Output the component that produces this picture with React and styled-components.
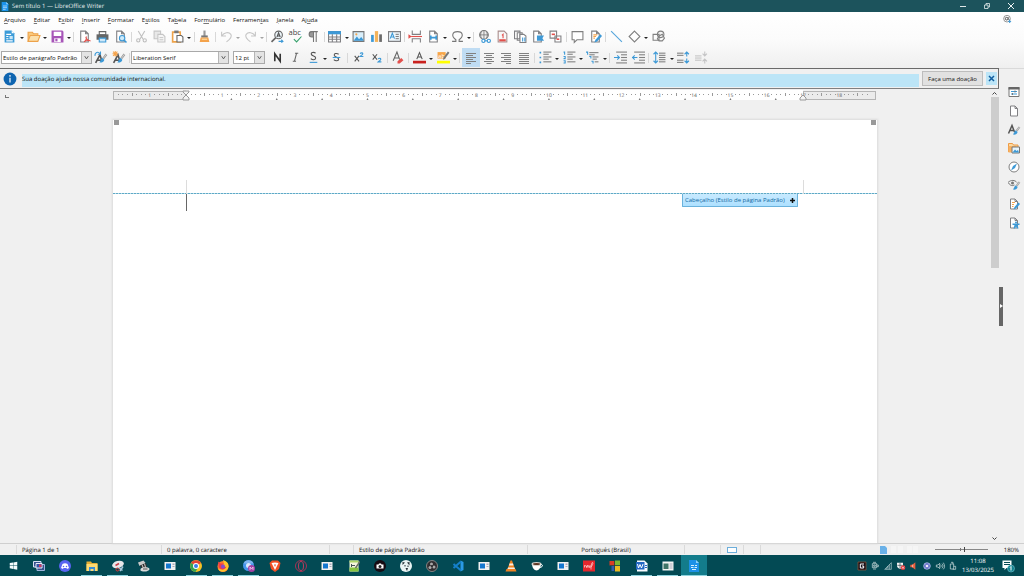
import React from 'react';
import styled, { createGlobalStyle } from 'styled-components';

const GlobalStyle = createGlobalStyle`
  * { box-sizing: border-box; }
  body {
    margin: 0;
    overflow: hidden;
    font-family: "Open Sans", "Noto Sans", sans-serif;
    font-size: 6px;
    line-height: 8px;
    color: #111;
    text-rendering: geometricPrecision;
  }
  button, select, input {
    font: inherit;
    color: inherit;
    margin: 0;
    padding: 0;
    border: 0;
    background: none;
  }
`;

const Window = styled.div`
  display: flex;
  flex-direction: column;
  height: 100vh;
  background: #f0f0f0;
`;

const TitleBar = styled.header`
  display: flex;
  align-items: center;
  height: 12px;
  padding: 0 1px;
  background: #1c535c;
  color: #e4eced;
`;

const TitleText = styled.span`
  flex: 1;
  padding-left: 3px;
`;

const WindowButton = styled.button`
  display: grid;
  place-items: center;
  width: 24px;
  height: 12px;
`;

const Bars = styled.div`
  height: 56px;
  padding-top: 3px;
  background: linear-gradient(#ffffff, #fbfbfb 50%, #efefef);
`;

const MenuBar = styled.nav`
  display: flex;
  align-items: center;
  gap: 8px;
  height: 9px;
  margin-bottom: 2px;
  padding: 0 13px 0 4px;

  span {
    flex: 1;
  }
`;

const MenuItem = styled.button`
  white-space: nowrap;

  u {
    text-underline-offset: 1px;
    text-decoration-thickness: 1px;
    text-decoration-color: #777;
  }
`;

const ToolRow = styled.div`
  display: flex;
  align-items: center;
  height: 21px;
  padding-left: 1px;
`;

const Tools = styled.div`
  display: flex;
  align-items: center;
  height: 20px;
  width: ${p => p.$width}px;
`;

const ToolButton = styled.button`
  display: grid;
  place-items: center;
  flex: 18 1 0;
  min-width: 0;
  height: 19px;
  background: ${p => (p.$on ? '#bfdcf3' : 'none')};
  opacity: ${p => (p.disabled ? 0.4 : 1)};
`;

const ArrowButton = styled.button`
  display: grid;
  place-items: center;
  flex: 6 1 0;
  min-width: 0;
  height: 19px;
  opacity: ${p => (p.disabled ? 0.4 : 1)};

  &::before {
    content: "";
    margin-top: 2px;
    border: 2px solid transparent;
    border-top-color: #222;
    border-bottom: 0;
  }
`;

const Separator = styled.i`
  flex: 4 1 0;
  height: 10px;
  background: linear-gradient(#d8d8d8, #d8d8d8) center / 1px 100% no-repeat;
`;

const Combo = styled.label`
  display: grid;
  grid-template-columns: 1fr 10px;
  width: ${p => p.$width}px;
  height: 13px;
  margin-right: ${p => p.$after || 0}px;
  border: 1px solid #a9a9a9;
  background: #fff;

  select {
    grid-area: 1 / 1 / 2 / 3;
    appearance: none;
    padding-left: 1px;
    outline: 0;
  }

  svg {
    grid-area: 1 / 2;
    width: 10px;
    height: 11px;
    background: #e3e3e3;
    border-left: 1px solid #b5b5b5;
    pointer-events: none;
  }
`;

const Body = styled.div`
  display: flex;
  flex: 1;
  min-height: 0;
`;

const Main = styled.main`
  display: flex;
  flex-direction: column;
  flex: 1;
  min-width: 0;
`;

const InfoBar = styled.section`
  display: flex;
  align-items: center;
  gap: 3px;
  height: 21px;
  padding: 0 1px 0 3px;
  border: 1px solid #6a6a6a;
  border-left: 0;
  border-bottom-color: #808080;
`;

const InfoText = styled.p`
  flex: 1;
  align-self: end;
  height: 13px;
  margin: 0 0 1px 2px;
  line-height: 10px;
  background: #bce5f7;
`;

const DonateButton = styled.button`
  width: 61px;
  height: 15px;
  background: #e1e1e1;
  border: 1px solid #bdbdbd;
`;

const CloseButton = styled.button`
  display: grid;
  place-items: center;
  width: 11px;
  height: 13px;
  background: #bce5f7;
`;

const Workspace = styled.div`
  display: flex;
  flex: 1;
  min-height: 0;
`;

const Canvas = styled.div`
  display: flex;
  flex-direction: column;
  flex: 1;
  min-width: 0;
`;

const RulerRow = styled.div`
  display: flex;
  flex: none;
  align-items: center;
  height: 12px;
  margin-bottom: 19px;
  position: relative;
`;

const TabKind = styled.button`
  position: absolute;
  left: 5px;
  top: 6px;
  width: 4px;
  height: 3px;
  border-left: 1px solid #777;
  border-bottom: 1px solid #777;
`;

const Ruler = styled.svg`
  display: block;
  width: 764px;
  height: 12px;
  margin: 0 auto;
  font-size: 5px;
`;

const Sheet = styled.article`
  position: relative;
  flex: 1;
  width: 764px;
  margin: 0 auto;
  background: #fff;
  box-shadow: 0 0 2px 1px #dadada;
`;

const Handle = styled.i`
  position: absolute;
  top: 0;
  ${p => p.$side}: 1px;
  width: 5px;
  height: 5px;
  background: #999;
`;

const HeaderArea = styled.div`
  display: flex;
  align-items: flex-end;
  justify-content: space-between;
  height: 74px;
  padding: 0 73px;
  background: repeating-linear-gradient(90deg, #5fa9c6 0 2px, #b5dbe9 2px 3px) bottom / 100% 1px no-repeat;

  i {
    width: 1px;
    height: 14px;
    background: #dcdcdc;
  }
`;

const Caret = styled.div`
  width: 1px;
  height: 17px;
  margin-left: 73px;
  background: #666;
`;

const HeaderTag = styled.button`
  position: absolute;
  top: 74px;
  right: 79px;
  display: flex;
  align-items: center;
  justify-content: space-between;
  width: 116px;
  height: 13px;
  padding: 0 2px;
  border: 1px solid #6ab2dc;
  border-top: 0;
  border-radius: 0 0 1px 1px;
  background: linear-gradient(#c8eaff, #ade0ff);
  color: #11699f;
`;

const ScrollBar = styled.div`
  display: flex;
  flex-direction: column;
  align-items: center;
  justify-content: space-between;
  width: 9px;
  background: #f0f0f0;
`;

const ScrollArrow = styled.button`
  display: grid;
  place-items: center;
  width: 9px;
  height: 8px;
  transform: ${p => (p.$down ? 'rotate(180deg)' : 'none')};
`;

const ScrollTrack = styled.div`
  flex: 1;
  width: 8px;

  &::before {
    content: "";
    display: block;
    height: 39%;
    background: #cdcdcd;
  }
`;

const Splitter = styled.div`
  display: flex;
  align-items: center;
  width: 4px;
  border-top: 1px solid #d9d9d9;
`;

const SplitterButton = styled.button`
  display: grid;
  place-items: center;
  width: 4px;
  height: 39px;
  background: #666;
`;

const SideBar = styled.aside`
  display: flex;
  flex-direction: column;
  align-items: center;
  width: 21px;
  padding-top: 14px;
  border-top: 1px solid #d9d9d9;
`;

const Deck = styled.div`
  display: flex;
  flex-direction: column;
  height: 149px;

  button {
    display: grid;
    place-items: center;
    flex: 1;
    width: 20px;
    min-height: 0;
  }
`;

const StatusBar = styled.footer`
  display: flex;
  align-items: center;
  height: 12px;
  border-top: 1px solid #cfcfcf;
`;

const StatusCell = styled.div`
  display: flex;
  align-items: center;
  justify-content: ${p => (p.$center ? 'center' : 'flex-start')};
  width: ${p => p.$width}px;
  height: 9px;
  padding-left: ${p => (p.$center ? 0 : 5)}px;
  border-right: 1px solid #dadada;
  white-space: nowrap;
`;

const StatusEnd = styled.div`
  display: flex;
  align-items: center;
  justify-content: flex-end;
  gap: 16px;
  flex: 1;
  padding-right: 5px;
`;

const Zoom = styled.input`
  appearance: none;
  width: 53px;
  height: 7px;
  background:
    linear-gradient(#777, #777) 48% 50% / 1px 3px no-repeat,
    linear-gradient(#888, #888) center / 100% 1px no-repeat;

  &::-webkit-slider-thumb {
    appearance: none;
    width: 1px;
    height: 5px;
    background: #444;
  }
`;

const TaskBar = styled.footer`
  display: flex;
  justify-content: space-between;
  height: 21px;
  background: #034a54;
  color: #fff;
`;

const Apps = styled.div`
  display: flex;
  width: 707px;
`;

const AppButton = styled.button`
  display: grid;
  place-items: center;
  flex: 1;
  min-width: 0;
  background: ${p => (p.$active ? '#137c8b' : 'none')};
  box-shadow: ${p => (p.$active ? 'inset 0 -1px #8fd3de' : 'none')};

  &::after {
    content: "";
    display: ${p => (p.$open ? 'block' : 'none')};
    grid-area: 1 / 1;
    align-self: end;
    width: 21px;
    height: 1px;
    background: #8fd3de;
  }

  svg {
    grid-area: 1 / 1;
  }
`;

const Tray = styled.div`
  display: flex;
  align-items: center;
  padding-right: 10px;

  button {
    display: grid;
    place-items: center;
    width: 13px;
    height: 20px;
  }
`;

const Clock = styled.time`
  width: 42px;
  padding-right: 4px;
  text-align: center;
  line-height: 9px;
`;

const G = '#808083';
const B = '#3d99d6';
const R = '#e2504c';

const doc = <path d="M5 2h9l5 5v15H5zM14 2v5h5" fill="#fff" stroke={G} strokeWidth="2" />;
const lines = (list, color = '#808080') => list.map(([x, y, w], i) => <path key={i} d={`M${x} ${y}h${w}`} stroke={color} strokeWidth="2" />);
const pen = (
  <g>
    <path d="M23 6l-6 8" stroke="#999" strokeWidth="4" />
    <path d="M23 6l-6 8" stroke="#fff" strokeWidth="1" />
    <path d="M16 13c-3 0-3 4-6 8 4 1 9-1 9-5z" fill={B} />
  </g>
);

// Everything is drawn on a 24 unit grid
const icons = {
  newDoc: <><path d="M3 1h13l5 5v17H3z" fill="#3b9bd8" /><path d="M16 1v5h5" fill="#fff" /><path d="M6 8h9M6 12h4M6 16h4M6 20h12" stroke="#fff" strokeWidth="2" /><path d="M12 11h6v6h-6z" fill="#c8e6f8" /></>,
  open: <><path d="M2 21V4h8l2 3h8v4" fill="#f9c97b" stroke="#eda24a" strokeWidth="2" /><path d="M2 21L6 10h18l-4 11z" fill="#fbe0ac" stroke="#eda24a" strokeWidth="2" /></>,
  save: <><path d="M1 1h20l2 2v20H1z" fill="#a755b8" /><path d="M5 3h14v8H5zM6 15h12v7H6z" fill="#fff" /><path d="M8 16h4v5H8z" fill="#a755b8" /></>,
  pdf: <>{doc}<path d="M11 22c3-2 5-6 4-9-2 2 4 7 8 7-4-1-9 0-12 2" stroke={R} strokeWidth="2" fill="none" /></>,
  print: <><path d="M6 3h12v6H6z" fill="#fff" stroke="#666" strokeWidth="2" /><path d="M1 8h22v10H1z" fill="#666" /><path d="M6 15h12v7H6z" fill="#cfe8f8" stroke={B} strokeWidth="2" /></>,
  preview: <>{doc}<circle cx="15" cy="15" r="5" fill="#cfeaf9" stroke={B} strokeWidth="2" /><path d="M18 18l5 5" stroke={B} strokeWidth="3" /></>,
  cut: <><path d="M6 2l9 15M18 2L9 17" stroke="#666" strokeWidth="2" /><circle cx="6" cy="19" r="3" fill="none" stroke="#666" strokeWidth="2" /><circle cx="18" cy="19" r="3" fill="none" stroke="#666" strokeWidth="2" /></>,
  copy: <><path d="M2 2h12v14H2z" fill="#ccc" stroke="#777" strokeWidth="2" /><path d="M9 8h9l4 4v10H9z" fill="#eee" stroke="#777" strokeWidth="2" />{lines([[12, 14, 7], [12, 18, 7]])}</>,
  paste: <><path d="M3 4h14v18H3z" fill="#fff" stroke="#eda24a" strokeWidth="3" /><path d="M6 1h8v5H6z" fill="#777" /><path d="M11 10h8l3 3v9H11z" fill="#fff" stroke="#666" strokeWidth="2" /></>,
  brush: <><path d="M10 1h4v10h-4z" fill="#999" /><path d="M6 10h12v4H6z" fill="#777" /><path d="M5 14h14l2 8H3z" fill="#f4a34b" /><path d="M7 17h10" stroke="#fbe0ac" strokeWidth="2" /></>,
  undo: <path d="M3 3v8h8M3 11c5-7 13-8 17-3 3 5-1 9-8 14" fill="none" stroke="#777" strokeWidth="2" />,
  redo: <path d="M21 3v8h-8M21 11C16 4 8 3 4 8c-3 5 1 9 8 14" fill="none" stroke="#777" strokeWidth="2" />,
  find: <><circle cx="14" cy="9" r="7" fill="#eef7fc" stroke="#666" strokeWidth="2" /><path d="M9 14l-8 8" stroke="#666" strokeWidth="3" /><path d="M11 13l3-8 3 8M12 11h4" stroke="#555" strokeWidth="2" fill="none" /><path d="M14 21h8m-3-3l3 3-3 2" stroke={B} strokeWidth="2" fill="none" /></>,
  spell: <><text x="-1" y="10" fontSize="14" fill="#444">abc</text><path d="M9 17l5 5 9-10" stroke="#35a06b" strokeWidth="2" fill="none" /></>,
  pilcrow: <><path d="M12 2H9a5 5 0 0 0 0 11h3z" fill="#999" /><path d="M20 3H9a5 5 0 0 0 0 10h3M12 3v19M17 3v19" stroke="#777" strokeWidth="2" fill="none" /></>,
  table: <><path d="M1 3h22v19H1z" fill="#fff" stroke={G} strokeWidth="2" /><path d="M0 2h24v6H0z" fill={B} /><path d="M1 13h22M1 17h22M8 8v14M16 8v14" stroke={G} strokeWidth="2" /></>,
  image: <><path d="M2 3h20v18H2z" fill="#d9effb" stroke="#777" strokeWidth="2" /><path d="M3 20l6-8 4 5 4-4 4 5v2z" fill={B} /><circle cx="8" cy="8" r="2" fill="#f4a34b" /></>,
  chart: <><path d="M2 9h5v13H2z" fill={B} /><path d="M9 2h6v20H9z" fill="#f4b35b" /><path d="M17 8h5v14h-5z" fill="#6b6b6b" /></>,
  textbox: <><path d="M1 3h22v18H1z" fill="#eef7fc" stroke={G} strokeWidth="2" /><path d="M4 16l4-10 4 10M5 13h6" stroke={B} strokeWidth="2" fill="none" />{lines([[14, 8, 6], [14, 12, 6], [14, 16, 6]])}</>,
  pageBreak: <><path d="M6 1v7h15V1M6 23v-7h15v7" fill="none" stroke={G} strokeWidth="2" /><path d="M4 12h20" stroke={R} strokeWidth="2" /><path d="M-1 8l6 4-6 4z" fill={R} /></>,
  field: <>{doc}<path d="M7 14h10M7 10v8M17 10v8" stroke={B} strokeWidth="3" /></>,
  omega: <path d="M2 21h7v-3C0 12 2 3 12 3s12 9 3 15v3h7" fill="none" stroke="#777" strokeWidth="2" />,
  link: <><circle cx="11" cy="9" r="8" fill="#eee" stroke="#777" strokeWidth="2" /><path d="M3 9h16M11 1v16M7 2c-3 5-3 9 0 14M15 2c3 5 3 9 0 14" stroke="#777" strokeWidth="1.500" fill="none" /><circle cx="10" cy="20" r="3" fill="#fff" stroke={B} strokeWidth="2" /><circle cx="20" cy="20" r="3" fill="#fff" stroke={B} strokeWidth="2" /><path d="M12 20h6" stroke={B} strokeWidth="2" /></>,
  footnote: <><path d="M4 2h11l5 5v15H4z" fill="#f8f8f8" stroke="#a98c8b" strokeWidth="2" /><path d="M6 19h12" stroke={R} strokeWidth="4" /><path d="M11 10l2-2v7" stroke={R} strokeWidth="2" fill="none" /></>,
  endnote: <><path d="M1 2h10v14H1zM6 5h9v14H6z" fill="#fff" stroke={G} strokeWidth="2" /><path d="M11 8h7l4 3v12H11z" fill="#fff" stroke={G} strokeWidth="2" /><path d="M16 14v7M20 14v7" stroke={B} strokeWidth="2" /></>,
  bookmark: <>{doc}<path d="M11 10h13l-3 5 3 5H11z" fill={B} /></>,
  crossRef: <><path d="M2 2h12v13H2zM11 11h11v11H11z" fill="#fff" stroke={G} strokeWidth="2" /><path d="M5 8h6" stroke={R} strokeWidth="3" /><path d="M14 17h5" stroke={R} strokeWidth="3" /></>,
  comment: <path d="M2 3h20v15H11l-5 5v-5H2z" fill="#fff" stroke="#808080" strokeWidth="2" />,
  track: <>{doc}<path d="M8 9h7M8 12h5M8 15h3" stroke="#f4a34b" strokeWidth="2" /><path d="M21 8l3 3-9 10-5 2 2-5z" fill={B} /></>,
  line: <path d="M2 2l20 20" stroke="#56a6dc" strokeWidth="2" />,
  diamond: <path d="M12 2l10 10-10 10L2 12z" fill="#fff" stroke="#808080" strokeWidth="2" />,
  shapes: <><circle cx="16" cy="8" r="6" fill="#f4f4f4" stroke="#808080" strokeWidth="2" /><path d="M2 8h11v11H2z" fill="none" stroke="#808080" strokeWidth="2" /><path d="M13 11l6-3 4 7-4 5h-6l-3-4z" fill="none" stroke="#808080" strokeWidth="2" /></>,
  styleUpdate: <><path d="M3 22L11 7l4 13M6 17h8" stroke="#555" strokeWidth="3" fill="none" /><path d="M2 9c-1-6 6-9 9-4M12 1v5H7" stroke={B} strokeWidth="2" fill="none" />{pen}</>,
  styleNew: <><path d="M3 22L11 7l4 13M6 17h8" stroke="#555" strokeWidth="3" fill="none" /><path d="M6 0v10M1 5h10M2 1l8 8M10 1L2 9" stroke="#f4a34b" strokeWidth="2" />{pen}</>,
  bold: <path d="M7 19V5l10 14V5" stroke="#333" strokeWidth="3" fill="none" />,
  italic: <path d="M11 4h6M7 19h6M14 4l-4 15" stroke="#666" strokeWidth="2" fill="none" />,
  underline: <><path d="M16 4c-4-3-9-1-8 2 1 4 8 3 8 7s-6 4-9 1" stroke="#555" strokeWidth="2" fill="none" /><path d="M5 21h14" stroke={B} strokeWidth="2" /></>,
  strike: <><path d="M16 6c-4-3-9-1-8 2 1 4 8 3 8 7s-6 4-9 1" stroke="#555" strokeWidth="2" fill="none" /><path d="M5 12h14" stroke={B} strokeWidth="2" /></>,
  sup: <><path d="M5 9l8 10M13 9L5 19" stroke="#555" strokeWidth="2" /><path d="M15 5c1-2 5-2 5 0s-3 3-5 5h6" stroke={B} strokeWidth="2" fill="none" /></>,
  sub: <><path d="M5 6l8 10M13 6L5 16" stroke="#555" strokeWidth="2" /><path d="M15 15c1-2 5-2 5 0s-3 3-5 5h6" stroke={B} strokeWidth="2" fill="none" /></>,
  clear: <><path d="M4 18L11 2l5 14M7 13h8" stroke="#666" strokeWidth="2" fill="none" /><path d="M12 19l7-6 4 4-7 6h-4z" fill={R} /></>,
  fontColor: <><path d="M7 15l5-12 5 12M8 11h8" stroke="#555" strokeWidth="2" fill="none" /><path d="M0 18h24v5H0z" fill="#c9211e" /></>,
  highlight: <><path d="M1 2h15v12H1z" fill="#f7a649" /><text x="2" y="12" fontSize="11" fill="#fff">ab</text><path d="M23 3l-9 12-3 1 1-4 8-11z" fill="#777" /><path d="M0 18h24v5H0z" fill="#ffff00" /></>,
  left: lines([[2, 3, 20], [2, 7, 14], [2, 11, 20], [2, 15, 14], [2, 19, 20], [2, 23, 10]]),
  center: lines([[2, 3, 20], [6, 7, 12], [2, 11, 20], [6, 15, 12], [2, 19, 20], [7, 23, 10]]),
  right: lines([[2, 3, 20], [8, 7, 14], [2, 11, 20], [8, 15, 14], [2, 19, 20], [12, 23, 10]]),
  justify: lines([[2, 3, 20], [2, 7, 20], [2, 11, 20], [2, 15, 20], [2, 19, 20], [2, 23, 20]]),
  bullets: <><path d="M1 3h3M1 12h3M1 21h3" stroke={B} strokeWidth="3" />{lines([[8, 2, 15], [8, 6, 10], [8, 11, 15], [8, 15, 10], [8, 20, 15]])}</>,
  numbers: <><path d="M1 2h2v5M1 10h3v4H1M1 18h3v4H1" stroke={B} strokeWidth="2" fill="none" />{lines([[8, 2, 15], [8, 6, 10], [8, 11, 15], [8, 15, 10], [8, 20, 15]])}</>,
  outline: <><path d="M0 2h3v5M6 10h3v4M10 19h3v4" stroke={B} strokeWidth="2" fill="none" />{lines([[6, 3, 17], [6, 7, 10], [12, 11, 11], [12, 15, 8], [16, 20, 7]])}</>,
  indent: <>{lines([[4, 2, 20], [13, 7, 11], [13, 12, 11], [13, 17, 11], [4, 22, 20]])}<path d="M0 12h10M6 8l4 4-4 4" stroke={B} strokeWidth="2" fill="none" /></>,
  outdent: <>{lines([[4, 2, 20], [13, 7, 11], [13, 12, 11], [13, 17, 11], [4, 22, 20]])}<path d="M0 12h10M5 8l-4 4 4 4" stroke={B} strokeWidth="2" fill="none" /></>,
  spacing: <><path d="M5 2v20M1 6l4-4 4 4M1 18l4 4 4-4" stroke={B} strokeWidth="2" fill="none" />{lines([[11, 4, 12], [11, 8, 12], [11, 12, 12], [11, 16, 12], [11, 20, 12]])}</>,
  paraMore: <>{lines([[0, 4, 12], [0, 8, 12], [0, 17, 12], [0, 21, 12]])}<path d="M18 2v8M14 6l4-4 4 4M18 14v8M14 18l4 4 4-4" stroke={B} strokeWidth="2" fill="none" /></>,
  paraLess: <>{lines([[0, 9, 12], [0, 13, 12], [0, 17, 12]])}<path d="M18 1v8M14 5l4 4 4-4M18 23v-8M14 19l4-4 4 4" stroke={G} strokeWidth="2" fill="none" /></>,
  update: <><circle cx="12" cy="11" r="10" fill="none" stroke="#666" strokeWidth="2" /><circle cx="11" cy="11" r="4" fill="none" stroke="#555" strokeWidth="3" /><path d="M16 6v8l4 1" stroke="#555" strokeWidth="2" fill="none" /><path d="M20 14v8m-4-4l4 5 4-5" stroke={B} strokeWidth="3" fill="none" /></>,
  info: <><circle cx="12" cy="12" r="11" fill="#0e64b0" /><path d="M12 10v8M12 5v3" stroke="#fff" strokeWidth="2" /></>,
  props: <><path d="M2 3h20v18H2z" fill="#fff" stroke="#777" strokeWidth="2" /><path d="M1 2h22v5H1z" fill="#666" /><path d="M6 11h12M6 16h12" stroke={B} strokeWidth="2" /><path d="M14 9v4M9 14v4" stroke="#777" strokeWidth="2" /></>,
  page: doc,
  styles: <><path d="M1 19L8 3l5 13M4 13h8" stroke="#555" strokeWidth="3" fill="none" />{pen}</>,
  gallery: <><path d="M1 20V3h8l2 3h9v5" fill="#fbd9a0" stroke="#ee9a45" strokeWidth="2" /><path d="M1 8h16v13H1z" fill="#f7b163" /><path d="M8 10h15v12H8z" fill="#e8f5fc" stroke="#777" strokeWidth="2" /><path d="M9 21l5-6 3 3 3-2 2 5z" fill={B} /></>,
  navigator: <><circle cx="12" cy="12" r="10" fill="#fff" stroke="#808080" strokeWidth="2" /><path d="M18 5l-4 9-8 5 4-9z" fill={B} /></>,
  inspect: <><path d="M0 7c6-6 14-5 18 0M1 8c4 6 8 6 12 4" stroke="#777" strokeWidth="2" fill="none" /><circle cx="9" cy="8" r="3" fill="#777" />{pen}</>,
  check: <>{doc}<path d="M8 9h6M8 13h4M8 17h3" stroke="#f4a34b" strokeWidth="2" /><path d="M21 9l3 3-8 9-5 2 2-5z" fill={B} /></>,
  access: <>{doc}<circle cx="16" cy="11" r="2" fill={B} /><path d="M9 13h14v3h-4l2 7h-3l-2-4-2 4h-3l2-7H9z" fill={B} /></>,
};

const Icon = ({ name, size = 13 }) => (
  <svg width={size} height={size} viewBox="0 0 24 24" overflow="visible" aria-hidden="true">{icons[name]}</svg>
);

const windowTile = <><path d="M1 4h22v16H1z" fill="#f1f1f1" /><path d="M4 7h10v10H4z" fill="#1477cf" /><path d="M17 7h4v3h-4zM17 12h4v2h-4z" fill="#aab" /></>;

const apps = [
  ['Iniciar', <path d="M2 5l9-1v8H2zM12 4l10-2v10H12zM2 13h9v8l-9-2zM12 13h10v10l-10-2z" fill="#f4fbfc" />],
  ['Visão de tarefas', <><path d="M1 3h15v11H1z" fill="#34508e" stroke="#d7e0f5" strokeWidth="2" /><path d="M8 9h15v12H8z" fill="#34508e" stroke="#9fb4dc" strokeWidth="2" /><path d="M6 7h12v9H6z" fill="#3451a5" stroke="#e8ecf8" strokeWidth="2" /><path d="M12 9h5v5h-5z" fill="#d4385c" /></>],
  ['Discord', <><circle cx="12" cy="12" r="12" fill="#5865f2" /><path d="M7 8c3-2 7-2 10 0l3 8-4 2-1-2H9l-1 2-4-2z" fill="#fff" /><circle cx="9" cy="13" r="1.500" fill="#5865f2" /><circle cx="15" cy="13" r="1.500" fill="#5865f2" /></>],
  ['Explorador', <><path d="M1 3h9l2 3h11v16H1z" fill="#e8ae35" /><path d="M1 8h22v14H1z" fill="#ffda72" /><path d="M6 14h12v8h-3v-4H9v4H6z" fill="#3b8ed6" /></>, 'open'],
  ['Captura', <><ellipse cx="12" cy="9" rx="12" ry="7" fill="#e8e8ea" transform="rotate(-15 12 9)" /><path d="M7 11l7-4" stroke="#ca3c48" strokeWidth="3" /><circle cx="11" cy="19" r="3" fill="none" stroke="#d33" strokeWidth="2" /><path d="M14 15l7 6M22 13l-6 9" stroke="#aac9dc" strokeWidth="3" /></>, 'open'],
  ['Scanner', <><path d="M0 5l11-4 4 5-12 6z" fill="#c9c9c9" /><path d="M4 11l12-5 2 9-10 3z" fill="#34302f" /><path d="M8 9l3 8M13 7l2 8" stroke="#ccc" strokeWidth="2" /><path d="M5 18c2-5 18-5 18 0s-14 7-18 3z" fill="#dadada" /><path d="M10 18h9" stroke="#555" strokeWidth="2" /></>],
  ['Janela 1', windowTile],
  ['Chrome', <><circle cx="12" cy="12" r="12" fill="#f6c324" /><path d="M12 12L2 6a12 12 0 0 1 20 0z" fill="#e24435" /><path d="M12 12L2 6a12 12 0 0 0 9 18l5-9z" fill="#34a350" /><circle cx="12" cy="12" r="6" fill="#fff" /><circle cx="12" cy="12" r="4" fill="#377de8" /></>, 'open'],
  ['Firefox', <><circle cx="12" cy="13" r="11" fill="#ff7730" /><path d="M12 0c8 2 12 7 11 14-3 11-17 13-21 3 8 5 15 1 13-6z" fill="#ffc52c" /><path d="M2 3l5 4h6l-3 4c3 5 8 3 9 1-1 10-17 9-16-3z" fill="#f23c48" /><circle cx="12" cy="13" r="4" fill="#864dcd" /></>, 'open'],
  ['Chrome perfil', <><circle cx="11" cy="11" r="11" fill="#4796ed" /><path d="M1 7a11 11 0 0 1 20 0z" fill="#7db3ee" /><circle cx="11" cy="11" r="5" fill="#dbeafb" /><circle cx="17" cy="17" r="7" fill="#a541a5" /><path d="M14 20v-6l3 4 3-4v6" stroke="#f3d9f3" strokeWidth="1.500" fill="none" /></>, 'open'],
  ['Brave', <><path d="M6 1h12l5 5-3 12-8 6-8-6L1 6z" fill="#f35025" /><path d="M5 6l7-1 7 1-4 8-3 6-3-6z" fill="#fff" /><path d="M10 9h4l-2 5z" fill="#f35025" /></>],
  ['Opera GX', <><circle cx="12" cy="12" r="11" fill="none" stroke="#a53255" strokeWidth="2" /><ellipse cx="12" cy="12" rx="5" ry="9" fill="none" stroke="#bd3a5c" strokeWidth="2" /></>],
  ['Janela 2', windowTile],
  ['Editor', <><path d="M3 1h18v22H3z" fill="#f5f5df" /><path d="M3 1h18v4H3z" fill="#afd66a" /><path d="M3 15h18v8H3z" fill="#87c440" /><path d="M24 3l-9 13" stroke="#697060" strokeWidth="3" /><path d="M7 8v6M7 11h7" stroke="#455" strokeWidth="2" /></>],
  ['Câmera', <><circle cx="12" cy="12" r="12" fill="#160b12" /><path d="M5 9h4l1-2h4l1 2h4v8H5z" fill="#fff" /><circle cx="12" cy="13" r="3" fill="#252525" /></>],
  ['Panda', <><circle cx="12" cy="12" r="12" fill="#e8f3f3" /><path d="M5 4l5 1-5 5zM19 4l-5 1 5 6z" fill="#233036" /><path d="M9 10h2v3H9zM15 11h2v3h-2zM11 16h5l-2 6z" fill="#233036" /></>],
  ['OBS', <><circle cx="12" cy="12" r="11" fill="#302e31" stroke="#858585" strokeWidth="2" /><circle cx="11" cy="8" r="3" fill="#aaa" /><circle cx="16" cy="14" r="3" fill="#aaa" /><circle cx="8" cy="15" r="3" fill="#aaa" /><circle cx="12" cy="12" r="2" fill="#302e31" /></>],
  ['VS Code', <><path d="M17 1l6 3v16l-6 3z" fill="#2b9be6" /><path d="M18 3L3 16M18 21L3 8" stroke="#1580ca" strokeWidth="4" fill="none" /></>],
  ['Janela 3', windowTile],
  ['VLC', <><path d="M11 1h3l6 17H5z" fill="#ef8223" /><path d="M9 7h7l1 4H8zM6 15h13l1 3H5z" fill="#f6eee5" /><path d="M3 18h18l2 5H1z" fill="#ef8223" /></>],
  ['Java', <><path d="M2 8c1 17 17 17 18 0z" fill="#fff" /><ellipse cx="11" cy="8" rx="10" ry="4" fill="#d8d4d0" /><ellipse cx="11" cy="8" rx="7" ry="2" fill="#5e3523" /><path d="M19 9c6-1 5 6-2 6" stroke="#fff" strokeWidth="2" fill="none" /></>],
  ['Janela 4', windowTile],
  ['PDF', <><path d="M0 1h24v22H0z" fill="#e5262c" /><path d="M3 15v-4l4 1v3l3-5v5l4-4-1 4 4-2c2-3 4-8 2-8s-3 8-3 14" stroke="#ffd7d5" strokeWidth="1.500" fill="none" /></>],
  ['Blocos', <><path d="M1 2h10v9H1z" fill="#db3b24" /><path d="M12 1h10v10H12z" fill="#79b733" /><path d="M5 12h6v10H5z" fill="#315bac" /><path d="M12 12h10v11H12z" fill="#eabb21" /><path d="M11 2v20M2 11h20" stroke="#263b38" strokeWidth="1" /></>],
  ['Word', <><path d="M2 1h15l6 6v16H2z" fill="#f8fbff" /><path d="M0 4h17v15H0z" fill="#2368c4" /><path d="M3 8l2 8 3-7 3 7 3-8" stroke="#fff" strokeWidth="2" fill="none" /><path d="M18 11h4M18 15h4" stroke="#2368c4" strokeWidth="2" /></>, 'open'],
  ['Monitor', <><path d="M1 3h22v18H1z" fill="#f3f5f4" /><path d="M3 7h10v11H3z" fill="#3f7468" /><path d="M15 8h6M15 12h6M15 16h6" stroke="#aab" strokeWidth="2" /></>, 'open'],
  ['LibreOffice', <><path d="M2 0h14l6 6v18H2z" fill="#1c91e7" /><path d="M16 0l6 6h-6z" fill="#8ed1fb" /><path d="M6 11h6M6 15h5M8 19h8M14 11h4M13 15h5" stroke="#d8f0ff" strokeWidth="2" /></>, 'active'],
];

const tray = [
  ['Logitech G', <><path d="M0 0h24v24H0z" fill="#161019" stroke="#9c5937" strokeWidth="2" /><path d="M18 6H7v12h10v-6h-5" stroke="#fff" strokeWidth="3" fill="none" /></>],
  ['Câmera', <path d="M4 5h13v12H4zM17 9h5v5h-5M6 1h9M6 21h9M8 9h5v4H8z" stroke="#dce8e9" strokeWidth="2" fill="none" />],
  ['Rede', <path d="M2 22L22 2v20zM7 22c0-4 3-7 6-8M12 22V12M17 22V7" stroke="#b5cdd0" strokeWidth="2" fill="none" />],
  ['Segurança', <><path d="M0 2h18v9c0 5-5 8-9 10-4-2-9-5-9-10z" fill="#f4f4f4" /><path d="M9 3v17M1 10h16" stroke="#29434c" strokeWidth="2" /><circle cx="18" cy="17" r="7" fill="#e23b3d" /><path d="M15 14l6 6M21 14l-6 6" stroke="#fff" strokeWidth="2" /></>],
  ['Som', <><path d="M1 8h6l9-7v22l-9-7H1z" fill="#e75d3d" /><path d="M8 8v8" stroke="#f5b9a4" strokeWidth="3" /></>],
  ['Serviço', <><circle cx="12" cy="12" r="10" fill="#7884d5" stroke="#bac2f1" strokeWidth="2" /><path d="M12 3v18M3 12h18" stroke="#4052ae" strokeWidth="2" /><circle cx="12" cy="12" r="4" fill="#f2e9fa" /></>],
  ['Volume', <path d="M1 9h5l5-5v16l-5-5H1zM14 8c2 3 2 5 0 8M18 5c4 5 4 9 0 14M22 2c5 8 5 14 0 20" stroke="#dce8e9" strokeWidth="2" fill="none" />],
  ['USB', <path d="M4 6h10v15H4zM6 1h6v5M14 13h6v9h-9" stroke="#dce8e9" strokeWidth="2" fill="none" />],
];

// '|' is a separator, 'v' a drop-down arrow, '-' in front of either kind means greyed
const standard = 'newDoc v open v save v | pdf print preview | -cut -copy paste v | brush | -undo -v -redo -v | find spell pilcrow | table v image chart textbox | pageBreak field v omega v | link footnote endnote bookmark crossRef | comment track | line diamond v shapes';
const formatting = 'bold italic underline v strike | sup sub | clear | fontColor v highlight v | left center right justify | bullets v numbers v outline v | indent outdent | spacing v paraMore -paraLess';

const aligns = ['left', 'center', 'right', 'justify'];

const ToolSet = ({ items, width }) => (
  <Tools $width={width}>
    {items.split(' ').map((item, i) => {
      const off = item[0] === '-';
      const name = off ? item.slice(1) : item;
      if (name === '|') return <Separator key={i} />;
      if (name === 'v') return <ArrowButton key={i} disabled={off} aria-label="Opções" />;
      return (
        <ToolButton key={i} disabled={off} $on={name === 'left'} aria-label={name}>
          <Icon name={name} size={aligns.includes(name) ? 12 : 13} />
        </ToolButton>
      );
    })}
  </Tools>
);

const ComboBox = ({ label, value, width, after }) => (
  <Combo $width={width} $after={after}>
    <select aria-label={label}><option>{value}</option></select>
    <svg viewBox="0 0 10 11"><path d="M3 4l2 3 2-3" fill="none" stroke="#555" /></svg>
  </Combo>
);

// [before, accelerator, after]
const menus = [
  ['', 'A', 'rquivo'], ['', 'E', 'ditar'], ['E', 'x', 'ibir'], ['', 'I', 'nserir'], ['', 'F', 'ormatar'],
  ['E', 's', 'tilos'], ['Ta', 'b', 'ela'], ['For', 'm', 'ulário'], ['Ferramen', 't', 'as'], ['', 'J', 'anela'], ['Aj', 'u', 'da'],
];

const CM = 617 / 17;
const ORIGIN = 73;

const HorizontalRuler = () => {
  const marks = [];
  for (let i = -15; i <= 150; i++) {
    const x = ORIGIN + (i * CM) / 8;
    if (i % 8 === 0) {
      if (i !== 0) marks.push(<text key={i} x={x} y="8" textAnchor="middle" fill="#555">{Math.abs(i / 8)}</text>);
    } else {
      const h = i % 4 === 0 ? 3 : 1;
      marks.push(<rect key={i} x={Math.round(x)} y={h === 3 ? 4 : 5} width="1" height={h} fill="#999" />);
    }
  }
  const tabs = [];
  for (let i = 1; i < 14; i++) {
    const x = ORIGIN + i * CM * 1.25;
    tabs.push(<path key={i} d={`M${x - 1} 11l1-2 1 2z`} fill="#777" />);
  }
  return (
    <Ruler viewBox="0 0 764 12" aria-label="Régua">
      <rect x="73" y="1" width="617" height="10" fill="#fff" />
      <rect x="0.5" y="2.5" width="72" height="8" fill="#ebebeb" stroke="#b5b5b5" />
      <rect x="690.5" y="2.5" width="72" height="8" fill="#ebebeb" stroke="#b5b5b5" />
      {marks}
      {tabs}
      <path d="M70 2h6v1l-3 3-3-3zM70 11h6V9l-3-3-3 3zM687 11h6V9l-3-3-3 3z" fill="#f3f3f3" stroke="#999" />
    </Ruler>
  );
};

const App = () => {
  return (
    <Window>
      <GlobalStyle />
      <TitleBar>
        <svg width="8" height="9" viewBox="0 0 24 27"><path d="M2 0h14l6 7v20H2z" fill="#1c94ea" /><path d="M16 0l6 7h-6z" fill="#a6dcff" /><path d="M6 12h12M6 17h12M6 22h8" stroke="#d8f0ff" strokeWidth="2" /></svg>
        <TitleText>Sem título 1 — LibreOffice Writer</TitleText>
        <WindowButton aria-label="Minimizar"><svg width="6" height="6"><path d="M0 3.500h6" stroke="#dde7e8" /></svg></WindowButton>
        <WindowButton aria-label="Restaurar"><svg width="6" height="6" viewBox="0 0 12 12"><path d="M1 4h7v7H1zM4 4V1h7v7H8" stroke="#eef4f4" strokeWidth="1.500" fill="none" /></svg></WindowButton>
        <WindowButton aria-label="Fechar"><svg width="6" height="6"><path d="M0 0l6 6M6 0L0 6" stroke="#eef4f4" /></svg></WindowButton>
      </TitleBar>

      <Bars>
        <MenuBar>
          {menus.map(([a, key, b]) => (
            <MenuItem key={a + key + b}>{a}<u>{key}</u>{b}</MenuItem>
          ))}
          <span />
          <MenuItem aria-label="Atualização"><Icon name="update" size={8} /></MenuItem>
        </MenuBar>
        <ToolRow>
          <ToolSet items={standard} width={666} />
        </ToolRow>
        <ToolRow>
          <ComboBox label="Estilo de parágrafo" value="Estilo de parágrafo Padrão" width={91} />
          <ToolSet items="styleUpdate styleNew |" width={39} />
          <ComboBox label="Fonte" value="Liberation Serif" width={98} after={4} />
          <ComboBox label="Tamanho" value="12 pt" width={32} after={4} />
          <ToolSet items={formatting} width={441} />
        </ToolRow>
      </Bars>

      <Body>
        <Main>
          <InfoBar>
            <Icon name="info" size={14} />
            <InfoText>Sua doação ajuda nossa comunidade internacional.</InfoText>
            <DonateButton>Faça uma doação</DonateButton>
            <CloseButton aria-label="Fechar aviso"><svg width="7" height="7"><path d="M1 1l5 5M6 1L1 6" stroke="#125ea0" strokeWidth="1.500" /></svg></CloseButton>
          </InfoBar>
          <Workspace>
            <Canvas>
              <RulerRow>
                <TabKind aria-label="Tabulação" />
                <HorizontalRuler />
              </RulerRow>
              <Sheet>
                <Handle $side="left" />
                <Handle $side="right" />
                <HeaderArea><i /><i /></HeaderArea>
                <Caret />
                <HeaderTag>
                  Cabeçalho (Estilo de página Padrão)
                  <svg width="5" height="5"><path d="M0 2.500h5M2.500 0v5" stroke="#111" strokeWidth="1.500" /></svg>
                </HeaderTag>
              </Sheet>
            </Canvas>
            <ScrollBar>
              <ScrollArrow aria-label="Rolar para cima"><svg width="5" height="3" viewBox="0 0 10 6"><path d="M1 5l4-4 4 4" fill="none" stroke="#444" strokeWidth="2" /></svg></ScrollArrow>
              <ScrollTrack />
              <ScrollArrow $down aria-label="Rolar para baixo"><svg width="5" height="3" viewBox="0 0 10 6"><path d="M1 5l4-4 4 4" fill="none" stroke="#444" strokeWidth="2" /></svg></ScrollArrow>
            </ScrollBar>
          </Workspace>
        </Main>
        <Splitter>
          <SplitterButton aria-label="Ocultar painel"><svg width="3" height="4"><path d="M0 0l3 2-3 2z" fill="#fff" /></svg></SplitterButton>
        </Splitter>
        <SideBar>
          <Deck>
            {['props', 'page', 'styles', 'gallery', 'navigator', 'inspect', 'check', 'access'].map(name => (
              <button key={name} aria-label={name}><Icon name={name} size={12} /></button>
            ))}
          </Deck>
        </SideBar>
      </Body>

      <StatusBar>
        <StatusCell $width={17} />
        <StatusCell $width={145}>Página 1 de 1</StatusCell>
        <StatusCell $width={168}>0 palavra, 0 caractere</StatusCell>
        <StatusCell $width={24} />
        <StatusCell $width={174}>Estilo de página Padrão</StatusCell>
        <StatusCell $width={157} $center>Português (Brasil)</StatusCell>
        <StatusCell $width={36} />
        <StatusCell $width={23} $center><svg width="10" height="6"><rect x="0.5" y="0.5" width="9" height="5" fill="#fff" stroke="#6caedb" /></svg></StatusCell>
        <StatusCell $width={17} />
        <StatusEnd>
          <svg width="40" height="9"><path d="M1 1h5l2 2v6H1z" fill="#6ab1e8" /><path d="M12 1h5v7h-5zM19 1h5v7h-5zM28 1h5v7h-5zM34 1h5v7h-5z" fill="#f5f5f5" /></svg>
          <Zoom type="range" aria-label="Zoom" min="0" max="100" defaultValue="57" />
          <span>180%</span>
        </StatusEnd>
      </StatusBar>

      <TaskBar>
        <Apps>
          {apps.map(([name, art, state]) => (
            <AppButton key={name} aria-label={name} $open={state === 'open'} $active={state === 'active'}>
              <svg width={name === 'Iniciar' ? 9 : 12} height={name === 'Iniciar' ? 9 : 12} viewBox="0 0 24 24">{art}</svg>
            </AppButton>
          ))}
        </Apps>
        <Tray>
          {tray.map(([name, art]) => (
            <button key={name} aria-label={name}><svg width="8" height="8" viewBox="0 0 24 24" overflow="visible">{art}</svg></button>
          ))}
          <Clock>11:08<br />13/03/2025</Clock>
          <button aria-label="Notificações"><svg width="12" height="12" viewBox="0 0 24 24" overflow="visible"><path d="M1 1h18v15H9l-4 4v-4H1z" fill="#fff" /><path d="M4 5h12M4 9h12" stroke="#034a54" strokeWidth="2" /><circle cx="18" cy="17" r="7" fill="#118290" stroke="#8fd3de" /><path d="M16 15l2-2v8" stroke="#fff" strokeWidth="2" fill="none" /></svg></button>
        </Tray>
      </TaskBar>
    </Window>
  );
};

export default App;
